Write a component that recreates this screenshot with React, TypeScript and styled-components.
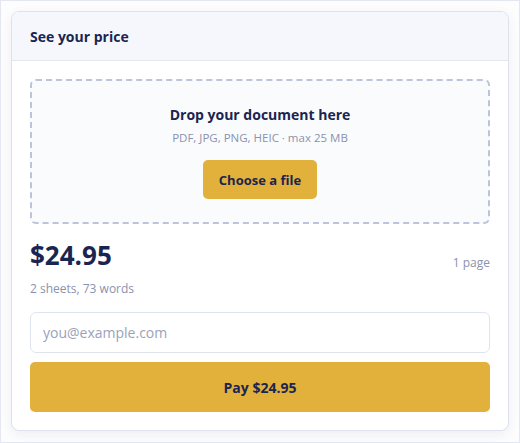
import React from "react";
import styled, { createGlobalStyle } from "styled-components";

const Global = createGlobalStyle`
  html, body { margin: 0; padding: 0; background: #ffffff; }
  body { font-family: "Open Sans", "Noto Sans", sans-serif; }
  * { box-sizing: border-box; }
`;

const Frame = styled.div`
  width: 520px;
  height: 443px;
  border: 1px solid #e4e7f2;
  padding: 10px;
  background: #fdfdfe;
`;

const Card = styled.section`
  border: 1px solid #dfe2ee;
  border-radius: 8px;
  background: #ffffff;
  box-shadow: 0 4px 12px rgba(40, 50, 100, 0.07);
  overflow: hidden;
`;

const Header = styled.header`
  height: 49px;
  display: flex;
  align-items: center;
  padding: 0 18px;
  background: #f6f7fc;
  border-bottom: 1px solid #e3e6f0;
  color: #1a2550;
  font-size: 14px;
  font-weight: 700;
`;

const Body = styled.div`
  padding: 18px;
  display: flex;
  flex-direction: column;
`;

const DropZone = styled.div`
  border: 2px dashed #bcc3da;
  border-radius: 6px;
  background: #fafbfd;
  padding: 24px 16px 23px;
  display: flex;
  flex-direction: column;
  align-items: center;
`;

const DropTitle = styled.div`
  color: #1a2550;
  font-size: 14px;
  font-weight: 700;
  line-height: 20px;
`;

const DropHint = styled.div`
  color: #8a92ad;
  font-size: 11.5px;
  line-height: 16px;
  margin-top: 5px;
`;

const Button = styled.button<{ $full?: boolean }>`
  border: none;
  border-radius: 5px;
  background: #e2b13c;
  color: #1a2550;
  font-family: inherit;
  font-weight: 700;
  font-size: ${(p) => (p.$full ? "14px" : "13px")};
  height: ${(p) => (p.$full ? "50px" : "39px")};
  width: ${(p) => (p.$full ? "100%" : "auto")};
  padding: 0 ${(p) => (p.$full ? "0" : "16px")};
  cursor: pointer;
`;

const ChooseButton = styled(Button)`
  margin-top: 14px;
`;

const PriceRow = styled.div`
  display: flex;
  justify-content: space-between;
  align-items: flex-end;
  margin-top: 16px;
`;

const Price = styled.div`
  color: #1a2550;
  font-size: 26px;
  font-weight: 700;
  line-height: 31px;
`;

const Muted = styled.div`
  color: #8a92ad;
  font-size: 12px;
  line-height: 16px;
`;

const Meta = styled(Muted)`
  margin-top: 10px;
`;

const Email = styled.input`
  margin-top: 15px;
  height: 41px;
  width: 100%;
  border: 1px solid #dfe3ef;
  border-radius: 6px;
  padding: 0 12px;
  font-family: inherit;
  font-size: 14px;
  color: #1a2550;
  outline: none;
  &::placeholder { color: #9aa2bb; }
`;

const PayButton = styled(Button)`
  margin-top: 9px;
`;

export default function App() {
  return (
    <>
      <Global />
      <Frame>
        <Card>
          <Header>See your price</Header>
          <Body>
            <DropZone>
              <DropTitle>Drop your document here</DropTitle>
              <DropHint>PDF, JPG, PNG, HEIC · max 25 MB</DropHint>
              <ChooseButton>Choose a file</ChooseButton>
            </DropZone>
            <PriceRow>
              <Price>$24.95</Price>
              <Muted>1 page</Muted>
            </PriceRow>
            <Meta>2 sheets, 73 words</Meta>
            <Email type="email" placeholder="you@example.com" />
            <PayButton $full>Pay $24.95</PayButton>
          </Body>
        </Card>
      </Frame>
    </>
  );
}
